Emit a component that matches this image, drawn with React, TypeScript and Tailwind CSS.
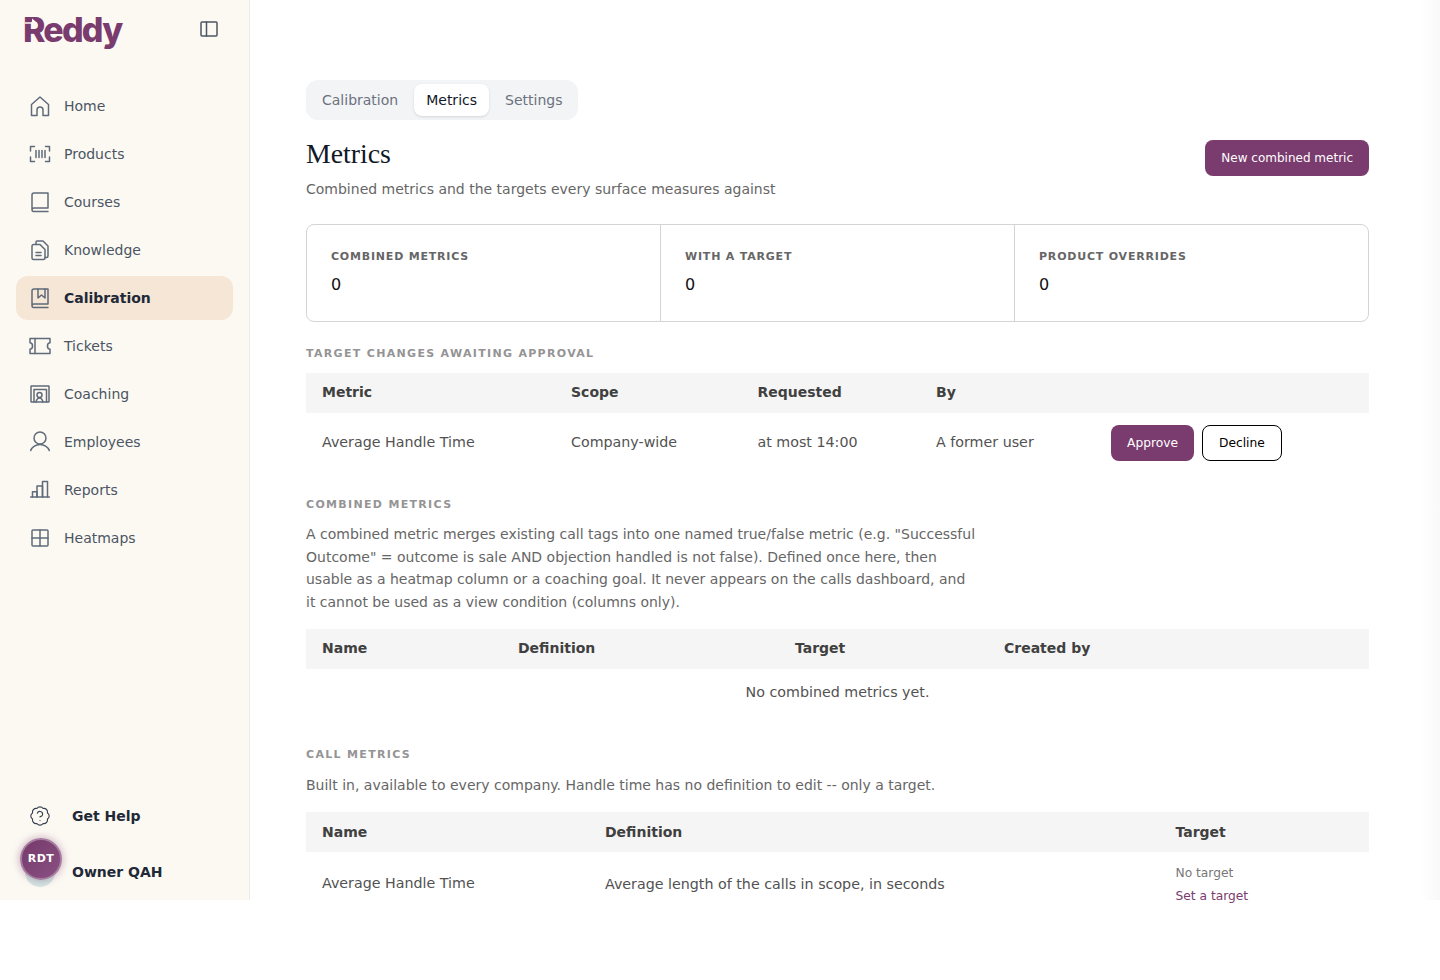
import React from 'react';
import { BadgeQuestionMark } from 'lucide-react';

type IconProps = { className?: string };

const Svg = ({ className, children }: IconProps & { children: React.ReactNode }) => (
  <svg
    viewBox="0 0 24 24"
    fill="none"
    stroke="currentColor"
    strokeWidth={1.5}
    strokeLinecap="round"
    strokeLinejoin="round"
    className={className}
  >
    {children}
  </svg>
);

const HomeIcon = ({ className }: IconProps) => (
  <Svg className={className}>
    <path d="M3.500 21.500V10.500L12 3l8.500 7.500v11H15V16a3 3 0 0 0-6 0v5.500z" />
  </Svg>
);

const ProductsIcon = ({ className }: IconProps) => (
  <Svg className={className}>
    <path d="M2.500 9V4.500H6.500M17.500 4.500h4V9M21.500 15v4.500h-4M6.500 19.500h-4V15" />
    <path d="M8 8.500v7M11 8.500v7M14 8.500v7M17 8.500v7" />
  </Svg>
);

const BookIcon = ({ className }: IconProps) => (
  <Svg className={className}>
    <path d="M4 19.500V5a2 2 0 0 1 2-2h14v15H6a2 2 0 0 0-2 2 1.500 1.500 0 0 0 1.500 1.500H20" />
  </Svg>
);

const KnowledgeIcon = ({ className }: IconProps) => (
  <Svg className={className}>
    <path d="M8 6.500V4a1 1 0 0 1 1-1h6l5 5v10a1.500 1.500 0 0 1-1.500 1.500H17" />
    <path d="M4 8a1.500 1.500 0 0 1 1.500-1.500H12l5 5V20a1.500 1.500 0 0 1-1.500 1.500h-10A1.500 1.500 0 0 1 4 20z" />
    <path d="M8 14.500h5M8 17.500h5" />
  </Svg>
);

const BookMarkIcon = ({ className }: IconProps) => (
  <Svg className={className}>
    <path d="M4 19.500V5a2 2 0 0 1 2-2h14v15H6a2 2 0 0 0-2 2 1.500 1.500 0 0 0 1.500 1.500H20" />
    <path d="M10 3v9l3.500-3 3.500 3V3" />
  </Svg>
);

const TicketIcon = ({ className }: IconProps) => (
  <Svg className={className}>
    <path d="M2 4.500h20v4.300a3 3 0 0 0-2.500 3.200 3 3 0 0 0 2.500 3.200v4.300H2v-4.300A3 3 0 0 0 4.500 12 3 3 0 0 0 2 8.800z" />
    <path d="M7 4.500v15" />
  </Svg>
);

const CoachingIcon = ({ className }: IconProps) => (
  <Svg className={className}>
    <rect x="3" y="4" width="18" height="16" rx="0.5" />
    <path d="M6 20V7.500h12.500V20" />
    <circle cx="11.500" cy="13" r="2.500" />
    <path d="M8 20c.5-2 1.800-4 3.500-4s3 2 3.500 4" />
  </Svg>
);

const UserIcon = ({ className }: IconProps) => (
  <Svg className={className}>
    <circle cx="12" cy="8" r="6" />
    <path d="M2.700 20.500C4 17 8 14.500 12 14.500s8 2.500 9.300 6" />
  </Svg>
);

const ReportsIcon = ({ className }: IconProps) => (
  <Svg className={className}>
    <path d="M2.700 19h18.600" />
    <path d="M4.500 19v-5.300H9V19" />
    <path d="M9 19V8h5.500v11" />
    <path d="M14.500 19V3.500H19.500V19" />
  </Svg>
);

const HeatmapIcon = ({ className }: IconProps) => (
  <Svg className={className}>
    <rect x="4" y="4" width="16" height="16" rx="1" />
    <path d="M12 4v16M4 12h16" />
  </Svg>
);

const PanelIcon = ({ className }: IconProps) => (
  <Svg className={className}>
    <rect x="4" y="5" width="16" height="14" rx="1" />
    <path d="M9.500 5v14" />
  </Svg>
);

const navItems = [
  { label: 'Home', icon: HomeIcon },
  { label: 'Products', icon: ProductsIcon },
  { label: 'Courses', icon: BookIcon },
  { label: 'Knowledge', icon: KnowledgeIcon },
  { label: 'Calibration', icon: BookMarkIcon, active: true },
  { label: 'Tickets', icon: TicketIcon },
  { label: 'Coaching', icon: CoachingIcon },
  { label: 'Employees', icon: UserIcon },
  { label: 'Reports', icon: ReportsIcon },
  { label: 'Heatmaps', icon: HeatmapIcon },
];

const Sidebar = () => (
  <aside className="w-[250px] shrink-0 h-[900px] bg-[#fcf9f3] border-r border-[#ececec] flex flex-col">
    <div className="h-[84px] shrink-0 flex items-start justify-between pl-[23px] pr-[28px]">
      <span className="relative mt-[8px] [font-family:'Inter',sans-serif] font-extrabold text-[34px] leading-[44px] tracking-[-1.8px] text-[#7a3b6e]">
        Reddy
        {/* arrow cut into the R of the logo */}
        <svg viewBox="0 0 14 10" className="absolute left-[2px] top-[10px] w-[14px] h-[10px] fill-[#fcf9f3]">
          <path d="M0 4.300H7V0.500L12.500 5 7 9.500V5.700H0z" />
        </svg>
      </span>
      <PanelIcon className="mt-[17px] w-6 h-6 text-[#4b5563]" />
    </div>
    <nav className="flex flex-col gap-1 px-4">
      {navItems.map(({ label, icon: Icon, active }) => (
        <div
          key={label}
          className={
            active
              ? 'h-11 flex items-center gap-3 px-3 rounded-xl bg-[#f5e6d6] text-[#1f2937] font-bold text-sm'
              : 'h-11 flex items-center gap-3 px-3 rounded-xl text-[#4b5563] text-sm'
          }
        >
          <Icon className="w-6 h-6 shrink-0 text-[#5f6b7a]" />
          <span>{label}</span>
        </div>
      ))}
    </nav>
    <div className="mt-auto relative pb-[17px] pl-[28px]">
      <div className="flex items-center gap-[20px] h-[40px] mb-[25px]">
        <div className="w-6 flex justify-center">
          <BadgeQuestionMark className="w-[22px] h-[22px] text-[#374151]" strokeWidth={1.25} />
        </div>
        <span className="font-bold text-sm text-[#1f2937]">Get Help</span>
      </div>
      <div className="flex items-center h-[22px] pl-[44px]">
        <span className="font-bold text-sm text-[#1f2937]">Owner QAH</span>
      </div>
      <div className="absolute left-[25px] top-[61px] w-[30px] h-[30px] rounded-full bg-[#d3e6e2]" />
      <div className="absolute left-[20px] top-[42px] w-[42px] h-[42px] rounded-full bg-gradient-to-br from-[#753a6b] to-[#8b5083] border-2 border-[#a67c9f] shadow-[0_0_8px_rgba(122,59,110,0.45)] flex items-center justify-center text-white font-bold text-[11px] tracking-[0.5px]">
        RDT
      </div>
    </div>
  </aside>
);

const Label = ({ children }: { children: React.ReactNode }) => (
  <h2 className="text-[11px] leading-4 font-bold uppercase tracking-[0.12em] text-[#949494]">{children}</h2>
);

const Stat = ({ label, last }: { label: string; last?: boolean }) => (
  <div className={last ? 'flex-1 px-6 pt-6 h-full' : 'flex-1 px-6 pt-6 h-full border-r border-[#d4d4d4]'}>
    <div className="text-[11px] leading-4 font-bold uppercase tracking-[0.8px] text-[#666666]">{label}</div>
    <div className="mt-[8px] text-base leading-6 text-[#111111]">0</div>
  </div>
);

const HeadCell = ({ children }: { children: React.ReactNode }) => (
  <div className="font-bold text-sm text-[#404040]">{children}</div>
);

export default function App() {
  return (
    <div className="relative flex items-start bg-white [font-family:'DejaVu_Sans',sans-serif]">
      <Sidebar />
      <main className="flex-1 min-w-0 h-[906px] overflow-hidden pl-14 pr-[71px] pt-20 text-[#525252]">
        <div className="inline-flex h-10 items-center bg-[#f3f4f6] rounded-xl p-1 text-sm">
          <div className="px-3 h-8 flex items-center text-[#6b7280]">Calibration</div>
          <div className="ml-1 px-3 h-8 flex items-center rounded-lg bg-white shadow-sm text-[#111827]">Metrics</div>
          <div className="ml-1 px-3 h-8 flex items-center text-[#6b7280]">Settings</div>
        </div>

        <div className="mt-5 flex items-start justify-between">
          <div>
            <h1 className="[font-family:'Liberation_Serif',serif] text-[27.800px] leading-[28px] text-[#111827]">Metrics</h1>
            <p className="mt-[11px] text-sm leading-5 text-[#666666]">Combined metrics and the targets every surface measures against</p>
          </div>
          <button className="h-9 px-4 rounded-lg bg-[#7a3b6e] text-white text-xs font-medium">New combined metric</button>
        </div>

        <div className="mt-[25px] h-[98px] flex border border-[#d4d4d4] rounded-lg">
          <Stat label="Combined metrics" />
          <Stat label="With a target" />
          <Stat label="Product overrides" last />
        </div>

        <section className="mt-6">
          <Label>Target changes awaiting approval</Label>
          <div className="mt-[11px] h-10 bg-[#f5f5f5] grid grid-cols-[249px_186.500px_178.500px_1fr] items-center px-4 pb-[2px]">
            <HeadCell>Metric</HeadCell>
            <HeadCell>Scope</HeadCell>
            <HeadCell>Requested</HeadCell>
            <HeadCell>By</HeadCell>
          </div>
          <div className="h-[60px] grid grid-cols-[249px_186.500px_178.500px_175px_1fr] items-center px-4 text-[14.25px]">
            <div>Average Handle Time</div>
            <div>Company-wide</div>
            <div>at most 14:00</div>
            <div>A former user</div>
            <div className="flex gap-2">
              <button className="h-9 px-4 rounded-lg bg-[#7a3b6e] text-white text-[12.25px]">Approve</button>
              <button className="h-9 px-4 rounded-lg bg-white border border-black text-black text-[12.25px]">Decline</button>
            </div>
          </div>
        </section>

        <section className="mt-6">
          <Label>Combined metrics</Label>
          <p className="mt-[9.750px] max-w-[672px] text-sm leading-[22.750px] text-[#666666]">
            A combined metric merges existing call tags into one named true/false metric (e.g. "Successful Outcome" = outcome is sale AND objection handled is not false). Defined once here, then usable as a heatmap column or a coaching goal. It never appears on the calls dashboard, and it cannot be used as a view condition (columns only).
          </p>
          <div className="mt-[15.250px] h-10 bg-[#f5f5f5] grid grid-cols-[196px_277px_209px_1fr] items-center px-4 pb-[2px]">
            <HeadCell>Name</HeadCell>
            <HeadCell>Definition</HeadCell>
            <HeadCell>Target</HeadCell>
            <HeadCell>Created by</HeadCell>
          </div>
          <div className="h-[46px] pt-[2px] flex items-center justify-center text-[14.25px]">No combined metrics yet.</div>
        </section>

        <section className="mt-8">
          <Label>Call metrics</Label>
          <p className="mt-3 text-sm leading-5 text-[#666666]">Built in, available to every company. Handle time has no definition to edit -- only a target.</p>
          <div className="mt-[17px] h-10 bg-[#f5f5f5] grid grid-cols-[283px_570.500px_1fr] items-center px-4">
            <HeadCell>Name</HeadCell>
            <HeadCell>Definition</HeadCell>
            <HeadCell>Target</HeadCell>
          </div>
          <div className="mt-[10px] grid grid-cols-[283px_570.500px_1fr] items-center px-4 text-[14.25px]">
            <div className="pb-[2px]">Average Handle Time</div>
            <div>Average length of the calls in scope, in seconds</div>
            <div className="text-[12.250px] leading-[23px]">
              <div className="text-[#777777]">No target</div>
              <div className="text-[#7a3b6e]">Set a target</div>
            </div>
          </div>
        </section>
      </main>
      <div className="absolute right-0 top-0 h-[900px] w-[20px] bg-gradient-to-r from-white to-[#f9f9f9]" />
    </div>
  );
}
